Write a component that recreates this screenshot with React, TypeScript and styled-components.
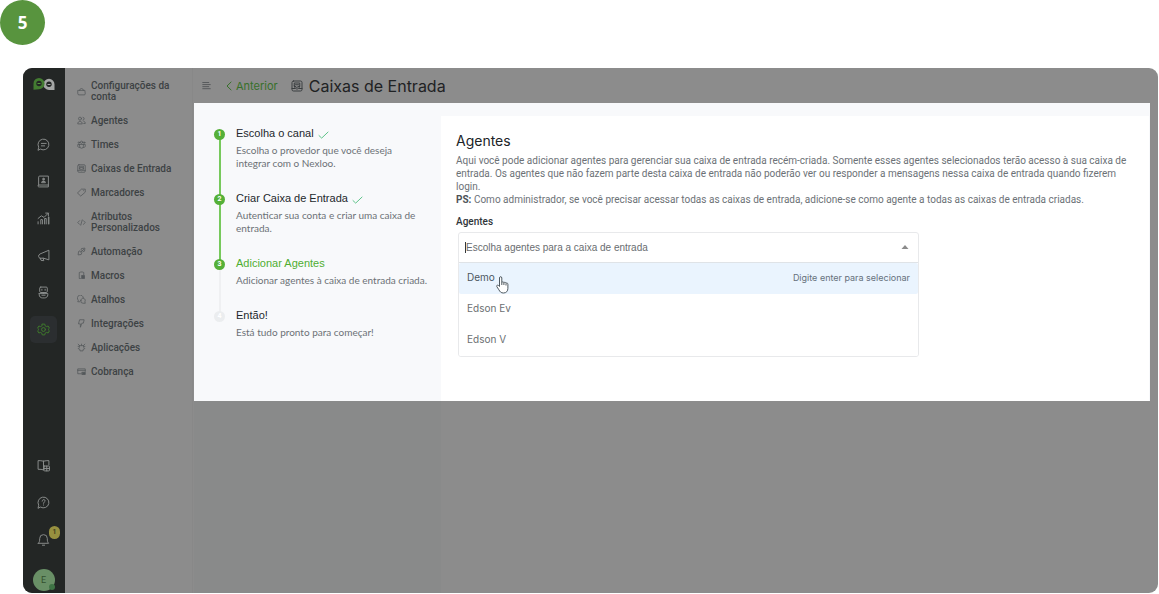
import React from 'react';
import styled, { createGlobalStyle } from 'styled-components';

const sans = `Roboto, "Liberation Sans", sans-serif`;
const display = `Inter, "Liberation Sans", sans-serif`;

const GlobalStyle = createGlobalStyle`
  * { box-sizing: border-box; }
  body { margin: 0; background: #fff; font-family: ${sans}; }
  button, input { font: inherit; }
  h1, h2, h3, p, ul, ol { margin: 0; padding: 0; font-weight: 400; }
  ul, ol { list-style: none; }
`;

const Page = styled.div`
  min-height: 100vh;
  display: flex;
  flex-direction: column;
  gap: 23px;
  padding: 0 1px 1px 0;
`;

const StepBadge = styled.div`
  width: 45px;
  height: 45px;
  border-radius: 50%;
  background: #58943e;
  color: #fff;
  display: grid;
  place-items: center;
  font: 700 17px/20px "Open Sans", sans-serif;
`;

const Frame = styled.div`
  flex: 1;
  margin-left: 23px;
  display: flex;
  border-radius: 9px;
  overflow: hidden;
  background: #8c8c8c;
`;

const Rail = styled.nav`
  width: 42px;
  flex: none;
  display: flex;
  flex-direction: column;
  align-items: center;
  background: #232625;
  padding: 9px 1px 2px 0;
`;

const LogoLink = styled.a`
  display: flex;
  margin-bottom: 39px;
`;

const RailGroup = styled.div<{ $end?: boolean }>`
  display: flex;
  flex-direction: column;
  gap: 10px;
  margin-top: ${p => (p.$end ? 'auto' : '0')};
`;

const RailButton = styled.button<{ $active?: boolean }>`
  position: relative;
  width: 27px;
  height: 27px;
  padding: 0;
  border: 0;
  border-radius: 5px;
  display: grid;
  place-items: center;
  background: ${p => (p.$active ? '#2b2e30' : 'transparent')};
  color: ${p => (p.$active ? '#3f7a2b' : '#8a8d8c')};
`;

const Counter = styled.span`
  position: absolute;
  top: 0;
  right: -3px;
  width: 11px;
  height: 13px;
  border-radius: 6px;
  background: #97903f;
  color: #33361c;
  font: 500 7px/13px ${sans};
  text-align: center;
`;

const Avatar = styled.button`
  position: relative;
  width: 22px;
  height: 22px;
  margin-top: 16px;
  padding: 0;
  border: 0;
  border-radius: 50%;
  background: #698f66;
  color: #33502f;
  font: 400 9px/22px ${sans};
`;

const Presence = styled.span`
  position: absolute;
  right: 0;
  bottom: 1px;
  width: 6px;
  height: 6px;
  border-radius: 50%;
  background: #3f7345;
`;

const Sidebar = styled.nav`
  width: 128px;
  flex: none;
  padding: 5px 12px;
  border-right: 1px solid #888;
`;

const SideLink = styled.a`
  display: flex;
  align-items: center;
  gap: 5px;
  padding: 7px 0 6px;
  color: #3d4244;
  font: 500 10px/11px ${sans};
  text-decoration: none;

  svg { flex: none; color: #53575a; }
`;

const Main = styled.main`
  flex: 1;
  min-width: 0;
  display: flex;
  flex-direction: column;
  padding-left: 1px;
`;

const Header = styled.header`
  height: 35px;
  display: flex;
  align-items: center;
  padding-left: 8px;
  color: #3a3e40;
`;

const MenuButton = styled.button`
  display: flex;
  padding: 0;
  border: 0;
  background: none;
  color: #54585a;
`;

const BackLink = styled.a`
  display: flex;
  align-items: center;
  gap: 4px;
  margin: 0 13px 0 15px;
  color: #37702a;
  font: 400 11px/16px ${display};
  text-decoration: none;
`;

const PageTitle = styled.h1`
  margin-left: 6px;
  color: #1f2224;
  font: 400 16px/24px ${display};
`;

const columns = '247px 1fr';

const Wizard = styled.div`
  display: grid;
  grid-template-columns: ${columns};
  margin-right: 8px;
  background: #f8f9fb;
`;

const Backdrop = styled.div`
  flex: 1;
  display: grid;
  grid-template-columns: ${columns};
  margin-right: 8px;
`;

const BackdropSide = styled.div`
  background: #898a8a;
`;

const Steps = styled.ol`
  padding: 20px 0 20px 20px;
`;

const Step = styled.li<{ $line?: string }>`
  position: relative;
  display: flex;
  gap: 11px;
  padding-bottom: 18px;

  &::before {
    content: "";
    position: absolute;
    left: 5px;
    top: 11px;
    bottom: -11px;
    width: 2px;
    background: ${p => p.$line ?? 'transparent'};
  }
`;

const StepDot = styled.span<{ $pending?: boolean }>`
  position: relative;
  z-index: 1;
  flex: none;
  width: 11px;
  height: 11px;
  margin-top: 6px;
  border-radius: 50%;
  background: ${p => (p.$pending ? '#ebedef' : '#55b038')};
  color: #fff;
  font: 700 7px/11px ${sans};
  text-align: center;
`;

const StepTitle = styled.h3<{ $current?: boolean }>`
  display: flex;
  align-items: center;
  gap: 4px;
  color: ${p => (p.$current ? '#4fae31' : '#23282c')};
  font: 400 11px/21px "Liberation Sans", sans-serif;

  svg { margin-top: 3px; }
`;

const StepText = styled.p`
  color: #6c7176;
  font: 400 10px/13px Lato, sans-serif;
  white-space: pre-line;
`;

const Panel = styled.section`
  margin: 13px 1px 0 0;
  padding: 15px 15px 44px;
  background: #fff;
`;

const PanelTitle = styled.h2`
  color: #202427;
  font: 400 14px/20px ${display};
`;

const PanelText = styled.p`
  margin: 3px 0 9px;
  color: #6c7176;
  font-size: 10px;
  line-height: 13px;

  strong { color: #4d5358; font-weight: 700; }
`;

const FieldLabel = styled.label`
  display: block;
  color: #30363a;
  font: 500 10px/13px ${sans};
`;

const Picker = styled.div`
  max-width: 461px;
  margin: 4px 0 0 2px;
  border: 1px solid #e8e9eb;
  border-radius: 3px;
`;

const PickerField = styled.div`
  display: flex;
  align-items: center;
  height: 30px;
  padding: 0 9px 0 6px;
  border-bottom: 1px solid #dfe3e7;
`;

const Caret = styled.span`
  width: 1px;
  height: 11px;
  background: #33383c;
`;

const PickerInput = styled.input`
  flex: 1;
  min-width: 0;
  padding: 0;
  border: 0;
  outline: 0;
  background: none;
  font: 400 10px/13px "Liberation Sans", sans-serif;

  &::placeholder { color: #696d70; opacity: 1; }
`;

const Option = styled.li<{ $highlighted?: boolean }>`
  position: relative;
  display: flex;
  align-items: center;
  justify-content: space-between;
  height: 31px;
  padding: 0 8px 2px;
  background: ${p => (p.$highlighted ? '#eaf4fe' : '#fff')};
  color: ${p => (p.$highlighted ? '#4c5661' : '#6b6f72')};
  font: 400 10px/13px ${display};
  border-radius: 2px;
`;

const Hint = styled.span`
  color: #66717c;
  font-size: 9px;
`;

const Pointer = styled.svg`
  position: absolute;
  left: 37px;
  top: 13px;
`;

type IconProps = { size?: number; weight?: number; children: React.ReactNode };
const Icon = ({ size = 13, weight = 1.8, children }: IconProps) => (
  <svg width={size} height={size} viewBox="0 0 24 24" fill="none" stroke="currentColor"
    strokeWidth={weight} strokeLinecap="round" strokeLinejoin="round" aria-hidden="true">
    {children}
  </svg>
);

const railTop = [
  { label: 'Conversas', icon: <path d="M2 22l1.200-5A10 10 0 1 1 7 20.800zM8 10h9M8 14.500h6" /> },
  { label: 'Contatos', icon: <><path d="M3 19V4a2 2 0 0 1 2-2h16v20H5a2 2 0 0 1-2-3.500h18" /><circle cx="12" cy="7.500" r="1.600" fill="currentColor" /><path d="M8.500 13.500c0-3.500 7-3.500 7 0z" fill="currentColor" /></> },
  { label: 'Relatórios', icon: <path d="M2 22v-4M7 22v-8h3v8M14 22V12h3v10M21 22V9h1v13M2 12l6-5 5 3 8-8M16 2h5v5" /> },
  { label: 'Campanhas', icon: <path d="M22 3v17L12 17H5.500A3.500 4 0 0 1 5 9.500zM6 17l1.500 4 5 .5-1-4.500" /> },
  { label: 'Robôs', icon: <><rect x="5" y="2" width="14" height="10" rx="2" /><path d="M9 6v2M15 6v2M4 14h16v2c0 4-3 6-6 6h-4c-3 0-6-2-6-6zM9 17h6M12 12v2" /></> },
  {
    label: 'Configurações', active: true,
    icon: <><path d="M9.700 2h4.600l.8 3.300 2.200 1.300 3.300-1L22.900 9.600 20.400 12l2.500 2.400-2.300 4-3.300-1-2.200 1.300-.8 3.300H9.700l-.8-3.300-2.200-1.300-3.300 1-2.300-4L3.600 12 1.100 9.600l2.300-4 3.300 1 2.200-1.300z" /><circle cx="12" cy="12" r="3.600" /></>,
  },
];

const railBottom = [
  { label: 'Documentação', icon: <><path d="M12 4v16M12 4C9 3 5 3 2 3v16c4 0 7 0 10 1M12 4c3-1 7-1 10-1v8" /><rect x="13" y="13" width="10" height="9" rx="1" /><path d="M13 17.500h10M18 13v9" /></> },
  { label: 'Ajuda', icon: <><path d="M2 22l1.200-5A10 10 0 1 1 7 20.800z" /><path d="M9.500 9.500c0-4 5.500-3.500 5.500-.5 0 2-3 2-3 4.500M12 16.500v.3" /></> },
  { label: 'Notificações', count: 1, icon: <path d="M2.500 19h19c-2-2-2.500-4-2.500-9a7 7 0 0 0-14 0c0 5-.5 7-2.500 9zM10 22.500h4" /> },
];

const inboxIcon = <><rect x="2" y="2" width="20" height="20" rx="3" /><path d="M6.500 12V6h11v6M9 9.500h6M2 17h6M22 17h-6M6.500 12c1 5 4 6 5.500 6s4.500-1 5.500-6l-5.500 2.500z" /></>;

const sideItems = [
  { label: 'Configurações da conta', icon: <path d="M3 9h18l1 9a3 3 0 0 1-3 3H5a3 3 0 0 1-3-3zM7 9c0-7 10-7 10 0" /> },
  { label: 'Agentes', icon: <><circle cx="8" cy="7" r="4" /><path d="M2 20c0-8 12-8 12 0zM16 3.500a3.800 3.800 0 0 1 0 7.500M18 14c3 .5 4 3 4 6h-4" /></> },
  { label: 'Times', icon: <><circle cx="12" cy="6" r="3" /><circle cx="5" cy="7" r="2" /><circle cx="19" cy="7" r="2" /><path d="M7 12h10v5a5 5 0 0 1-10 0zM7 12H2v4c0 3 2 4 5 4M17 12h5v4c0 3-2 4-5 4" /></> },
  { label: 'Caixas de Entrada', icon: inboxIcon },
  { label: 'Marcadores', icon: <path d="M13 3h9v8L10 21.500 2 14zM17.500 7v.2" /> },
  { label: 'Atributos Personalizados', icon: <path d="M7 7l-5 5 5 5M17 7l5 5-5 5M14 5l-4 14" /> },
  { label: 'Automação', icon: <path d="M10 14l8-8M13 4l8-1-1 8-4 1-4-4zM9 11l4 4-2 5-8 1 1-8z" /> },
  { label: 'Macros', icon: <><path d="M9 20H6V4c5-2 9-2 12 0v6" /><path d="M13 12h7v8h-7z" fill="currentColor" /></> },
  { label: 'Atalhos', icon: <path d="M7 18H2l1.500-4A8 8 0 1 1 17 8M10 15a6 6 0 1 1 11 3l1 4h-6a6 6 0 0 1-6-7z" /> },
  { label: 'Integrações', icon: <path d="M8 2h11l-2 9h-4L9 22v-9H5z" /> },
  { label: 'Aplicações', icon: <path d="M7 7h10l1 5 3 3-4 1-1 5H8l-1-5-4-1 3-3zM7 7L3 3M17 7l4-4M12 6V3M3 9h2M19 9h2" /> },
  { label: 'Cobrança', icon: <><path d="M11 18H2V5h20v7M2 9h20" /><path d="M14 14h8v6h-8z" fill="currentColor" /></> },
];

const steps = [
  { title: 'Escolha o canal', text: 'Escolha o provedor que você deseja\nintegrar com o Nexloo.', done: true, line: '#77c95c' },
  { title: 'Criar Caixa de Entrada', text: 'Autenticar sua conta e criar uma caixa de\nentrada.', done: true, line: '#77c95c' },
  { title: 'Adicionar Agentes', text: 'Adicionar agentes à caixa de entrada criada.', current: true, line: '#eff0f2' },
  { title: 'Então!', text: 'Está tudo pronto para começar!', pending: true },
];

const agents = ['Demo', 'Edson Ev', 'Edson V'];

const Logo = () => (
  <svg width="22" height="15" viewBox="0 0 22 15" aria-hidden="true">
    <path d="M16 1.800a5.500 5.500 0 0 1 5.500 5.500v5.700H16a5.500 5.500 0 0 1 0-11.200z" fill="#a5a7a6" />
    <path d="M6 1a5.500 5.500 0 1 1 0 11.200L.5 12.800V6.500A5.500 5.500 0 0 1 6 1z" fill="#437c31" />
    <circle cx="6" cy="6.500" r="2.700" fill="#232625" />
    <circle cx="16" cy="7.300" r="2.700" fill="#232625" />
    <path d="M4.500 6.500h3" stroke="#56903f" />
    <path d="M14.500 7.500h3" stroke="#a5a7a6" />
  </svg>
);

export default function App() {
  return (
    <>
      <GlobalStyle />
      <Page>
        <StepBadge>5</StepBadge>
        <Frame>
          <Rail aria-label="Principal">
            <LogoLink href="#" aria-label="Nexloo"><Logo /></LogoLink>
            <RailGroup>
              {railTop.map(item => (
                <RailButton key={item.label} aria-label={item.label} $active={item.active}>
                  <Icon>{item.icon}</Icon>
                </RailButton>
              ))}
            </RailGroup>
            <RailGroup $end>
              {railBottom.map(item => (
                <RailButton key={item.label} aria-label={item.label}>
                  <Icon>{item.icon}</Icon>
                  {item.count && <Counter>{item.count}</Counter>}
                </RailButton>
              ))}
            </RailGroup>
            <Avatar aria-label="Perfil">E<Presence /></Avatar>
          </Rail>

          <Sidebar aria-label="Configurações">
            {sideItems.map(item => (
              <SideLink href="#" key={item.label}>
                <Icon size={9} weight={2}>{item.icon}</Icon>
                {item.label}
              </SideLink>
            ))}
          </Sidebar>

          <Main>
            <Header>
              <MenuButton aria-label="Menu">
                <Icon size={9} weight={2.5}><path d="M2 4h16M2 9.500h20M2 15h16M2 20.500h20" /></Icon>
              </MenuButton>
              <BackLink href="#">
                <svg width="6" height="10" viewBox="0 0 6 10" fill="none" stroke="currentColor" aria-hidden="true">
                  <path d="M5.300 .8L1 5l4.300 4.200" />
                </svg>
                Anterior
              </BackLink>
              <Icon size={12} weight={2}>{inboxIcon}</Icon>
              <PageTitle>Caixas de Entrada</PageTitle>
            </Header>

            <Wizard>
              <Steps>
                {steps.map((step, i) => (
                  <Step key={step.title} $line={step.line}>
                    <StepDot $pending={step.pending}>{i + 1}</StepDot>
                    <div>
                      <StepTitle $current={step.current}>
                        {step.title}
                        {step.done && (
                          <svg width="11" height="8" viewBox="0 0 11 8" fill="none" stroke="#5fc48a" aria-hidden="true">
                            <path d="M.7 4.300l3 2.800L10.300 .8" />
                          </svg>
                        )}
                      </StepTitle>
                      <StepText>{step.text}</StepText>
                    </div>
                  </Step>
                ))}
              </Steps>

              <Panel>
                <PanelTitle>Agentes</PanelTitle>
                <PanelText>
                  Aqui você pode adicionar agentes para gerenciar sua caixa de entrada recém-criada. Somente esses
                  agentes selecionados terão acesso à sua caixa de entrada. Os agentes que não fazem parte desta caixa
                  de entrada não poderão ver ou responder a mensagens nessa caixa de entrada quando fizerem login.
                  <br />
                  <strong>PS:</strong> Como administrador, se você precisar acessar todas as caixas de entrada,
                  adicione-se como agente a todas as caixas de entrada criadas.
                </PanelText>
                <FieldLabel htmlFor="agents">Agentes</FieldLabel>
                <Picker>
                  <PickerField>
                    <Caret />
                    <PickerInput id="agents" role="combobox" aria-expanded="true" aria-controls="agent-list"
                      placeholder="Escolha agentes para a caixa de entrada" />
                    <svg width="8" height="5" viewBox="0 0 8 5" fill="#8b8b8b" aria-hidden="true">
                      <path d="M4 0l3.500 4h-7z" />
                    </svg>
                  </PickerField>
                  <ul id="agent-list" role="listbox" aria-label="Agentes">
                    {agents.map((name, i) => (
                      <Option key={name} role="option" aria-selected={i === 0} $highlighted={i === 0}>
                        {name}
                        {i === 0 && (
                          <>
                            <Hint>Digite enter para selecionar</Hint>
                            <Pointer width="13" height="18" viewBox="0 0 13 18" aria-hidden="true">
                              <path d="M3.500 10.500V2c0-1.800 2.300-1.800 2.300 0v4.500c.3-1 2-.9 2.100.3.500-.8 2-.6 2.100.5.600-.6 1.900-.3 1.900 1v4c0 2.700-1.500 4.700-4.400 4.700-2.500 0-3.600-1.300-4.600-3.200L.8 10.600c-.5-1.300.9-2 1.700-1.100z"
                                fill="#fff" stroke="#4f5960" />
                              <path d="M5.800 6.500V9M7.900 7v2M10 7.500V9.500" stroke="#4f5960" fill="none" />
                            </Pointer>
                          </>
                        )}
                      </Option>
                    ))}
                  </ul>
                </Picker>
              </Panel>
            </Wizard>
            <Backdrop><BackdropSide /></Backdrop>
          </Main>
        </Frame>
      </Page>
    </>
  );
}
